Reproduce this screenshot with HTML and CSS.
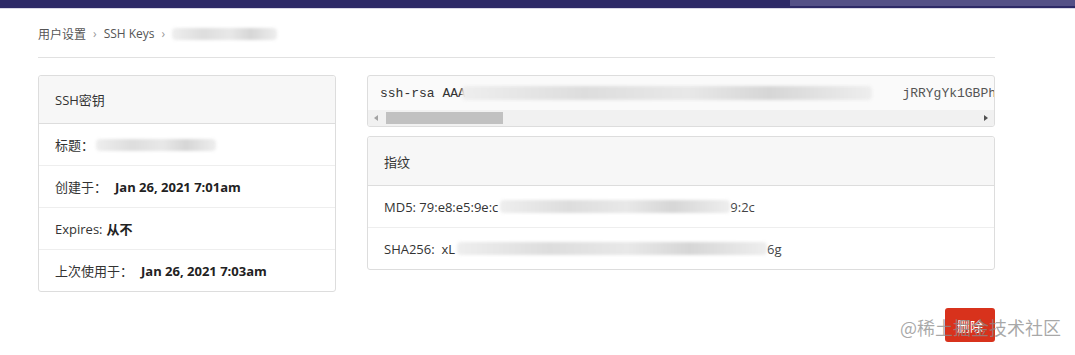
FILE: index.html
```html
<!DOCTYPE html>
<html lang="zh-CN">
<head>
<meta charset="utf-8">
<title>SSH Key</title>
<link rel="stylesheet" href="styles.css">
</head>
<body>
<div class="topbar"><div class="topbar-search"></div></div>
<div class="page">
  <nav class="crumbs">
    <span>用户设置</span><span class="sep">›</span><span>SSH Keys</span><span class="sep">›</span><span class="blur blur-crumb"></span>
  </nav>
  <div class="content">
    <div class="panel left">
      <div class="panel-head">SSH密钥</div>
      <div class="row"><span class="label">标题：</span><span class="blur blur-title"></span></div>
      <div class="row"><span class="label">创建于：</span><b>Jan 26, 2021 7:01am</b></div>
      <div class="row"><span class="label">Expires:</span> <b>从不</b></div>
      <div class="row"><span class="label">上次使用于：</span><b>Jan 26, 2021 7:03am</b></div>
    </div>
    <div class="right">
      <div class="keybox">
        <div class="keytext"><span>ssh-rsa AAA</span><span class="blur blur-key"></span><span class="keyend">jRRYgYk1GBPh</span></div>
        <div class="scrollbar">
          <span class="arrow arrow-left"></span>
          <span class="thumb"></span>
          <span class="arrow arrow-right"></span>
        </div>
      </div>
      <div class="panel fp">
        <div class="panel-head">指纹</div>
        <div class="row"><span>MD5: 79:e8:e5:9e:c</span><span class="blur blur-md5"></span><span class="tail">9:2c</span></div>
        <div class="row"><span>SHA256:&nbsp; xL</span><span class="blur blur-sha"></span><span class="tail">6g</span></div>
      </div>
    </div>
  </div>
  <div class="actions"><button class="btn-delete">删除</button></div>
</div>
<div class="watermark">@稀土掘金技术社区</div>
</body>
</html>
```
FILE: styles.css
```css
html, body {
  margin: 0;
  padding: 0;
  background: #fff;
}
body {
  font-family: "Open Sans", "Noto Sans CJK SC", sans-serif;
  font-size: 13px;
  color: #333;
  width: 1075px;
  height: 355px;
  overflow: hidden;
  position: relative;
}
.topbar {
  height: 8px;
  background: #2d2a67;
  border-bottom: 1px solid #d9d8e6;
  display: flex;
  justify-content: flex-end;
}
.topbar-search {
  width: 285px;
  height: 6px;
  background: #545187;
}
.page {
  width: 957px;
  margin-left: 38px;
}
.crumbs {
  display: flex;
  align-items: center;
  font-size: 12px;
  color: #555;
  border-bottom: 1px solid #e1e1e1;
  padding-top: 1px;
  box-sizing: border-box;
  height: 49px;
}
.crumbs .sep {
  color: #999;
  margin: 0 7px;
  font-size: 12px;
}
.blur {
  display: inline-block;
  background: linear-gradient(90deg, #eee 0%, #ddd 30%, #e8e8e8 55%, #d6d6d6 75%, #eee 100%);
  filter: blur(1.5px);
  border-radius: 4px;
}
.blur-crumb {
  width: 105px;
  height: 12px;
}
.content {
  display: flex;
  gap: 31px;
  margin-top: 17px;
  align-items: flex-start;
}
.panel {
  border: 1px solid #ddd;
  border-radius: 3px;
  background: #fff;
}
.left {
  width: 298px;
  box-sizing: border-box;
}
.panel-head {
  height: 47px;
  display: flex;
  align-items: center;
  padding: 0 16px;
  background: #f7f7f7;
  border-bottom: 1px solid #ddd;
  border-radius: 3px 3px 0 0;
}
.row {
  height: 41px;
  display: flex;
  align-items: center;
  padding: 0 16px;
  border-bottom: 1px solid #eee;
  white-space: pre;
}
.row:last-child {
  border-bottom: none;
}
.left .row .label {
  margin-right: 8px;
}
.left .row b {
  font-weight: 700;
  color: #222;
}
.left .row:nth-child(4) .label {
  margin-right: 4px;
}
.blur-title {
  width: 120px;
  height: 12px;
  margin-left: -6px;
}
.right {
  width: 628px;
  display: flex;
  flex-direction: column;
  gap: 9px;
}
.keybox {
  border: 1px solid #ddd;
  border-radius: 3px;
  background: #fafafa;
  overflow: hidden;
}
.keytext {
  height: 34px;
  display: flex;
  align-items: center;
  padding: 0 12px;
  font-family: "Liberation Mono", "DejaVu Sans Mono", monospace;
  font-size: 13px;
  color: #333;
  white-space: pre;
  overflow: hidden;
}
.blur-key {
  width: 410px;
  height: 14px;
  margin: 0 -4px;
}
.keyend {
  margin-left: auto;
  margin-right: -14px;
  color: #555;
}
.scrollbar {
  height: 16px;
  background: #f1f1f1;
  display: flex;
  align-items: center;
  padding: 0 6px;
  gap: 6px;
}
.arrow {
  width: 0;
  height: 0;
  border-top: 3px solid transparent;
  border-bottom: 3px solid transparent;
}
.arrow-left {
  border-right: 4px solid #a3a3a3;
}
.arrow-right {
  border-left: 4px solid #505050;
  margin-left: auto;
}
.thumb {
  width: 117px;
  height: 12px;
  background: #c1c1c1;
  margin-left: 2px;
}
.fp .panel-head {
  height: 48px;
}
.blur-md5 {
  width: 230px;
  height: 13px;
  margin-left: 2px;
}
.blur-sha {
  width: 310px;
  height: 13px;
  margin-left: 2px;
}
.tail {
  color: #444;
}
.actions {
  display: flex;
  justify-content: flex-end;
  margin-top: 16px;
}
.btn-delete {
  width: 50px;
  height: 34px;
  border: none;
  border-radius: 3px;
  background: #d8321c;
  color: #fff;
  font-family: "Noto Sans CJK SC", sans-serif;
  font-size: 13px;
  padding: 0;
}
.watermark {
  position: absolute;
  left: 900px;
  top: 315px;
  font-family: "Noto Sans CJK SC", sans-serif;
  font-size: 18px;
  line-height: 24px;
  color: rgba(140, 140, 140, 0.75);
  white-space: nowrap;
}
```
